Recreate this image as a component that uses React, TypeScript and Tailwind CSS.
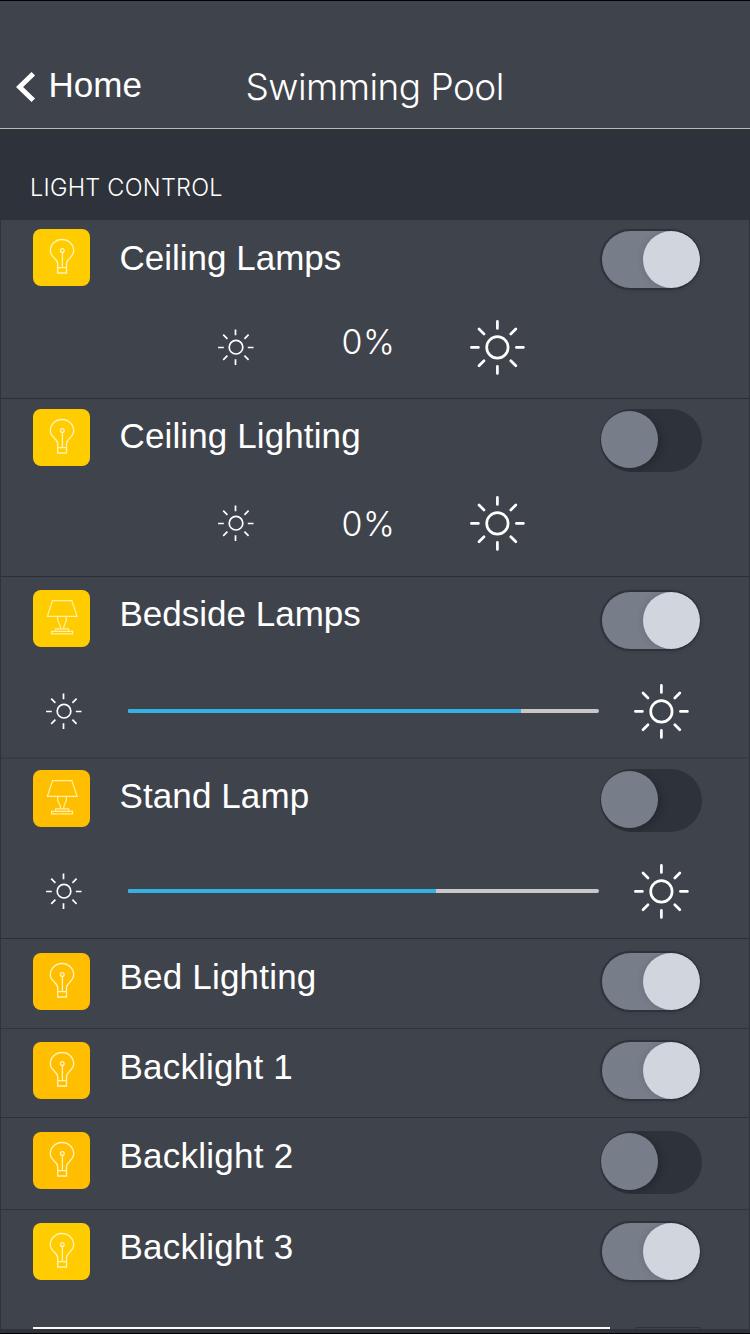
import React from "react";

type Row = {
  label: string;
  icon: "bulb" | "lamp";
  tile: string;
  on: boolean;
  row: string;
  iconTop: string;
  labelTop: string;
  toggleTop: string;
  dimmer?: { kind: "percent" | "slider"; value: number; sunTop: string; textTop?: string };
};

const rows: Row[] = [
  {
    label: "Ceiling Lamps", icon: "bulb", tile: "bg-[#ffcc00]", on: true,
    row: "h-[179px] border-b border-[#2b2e37]", iconTop: "mt-[9px]", labelTop: "mt-[18px]", toggleTop: "mt-[9px]",
    dimmer: { kind: "percent", value: 0, sunTop: "mt-[27px]", textTop: "mb-[11px]" },
  },
  {
    label: "Ceiling Lighting", icon: "bulb", tile: "bg-[#ffcc00]", on: false,
    row: "h-[178px] border-b border-[#2b2e37]", iconTop: "mt-[10px]", labelTop: "mt-[17px] tracking-[0.12px]", toggleTop: "mt-[10px]",
    dimmer: { kind: "percent", value: 0, sunTop: "mt-[24px]", textTop: "mt-[1px]" },
  },
  {
    label: "Bedside Lamps", icon: "lamp", tile: "bg-[#ffcc00]", on: true,
    row: "h-[182px] border-b-2 border-[#383c44]", iconTop: "mt-[13px]", labelTop: "mt-[17px]", toggleTop: "mt-[13px]",
    dimmer: { kind: "slider", value: 393, sunTop: "mt-[34px]" },
  },
  {
    label: "Stand Lamp", icon: "lamp", tile: "bg-[#ffbf00]", on: false,
    row: "h-[180px] border-b border-[#2b2e37]", iconTop: "mt-[11px]", labelTop: "mt-[17px] tracking-[0.1px]", toggleTop: "mt-[10px]",
    dimmer: { kind: "slider", value: 308, sunTop: "mt-[32px]" },
  },
  {
    label: "Bed Lighting", icon: "bulb", tile: "bg-[#ffbf00]", on: true,
    row: "h-[90px] border-b border-[#30343c]", iconTop: "mt-[14px]", labelTop: "mt-[18px] tracking-[0.2px]", toggleTop: "mt-[12px]",
  },
  {
    label: "Backlight 1", icon: "bulb", tile: "bg-[#ffbf00]", on: true,
    row: "h-[89px] border-b border-[#2d3139]", iconTop: "mt-[13px]", labelTop: "mt-[18px] tracking-[0.2px]", toggleTop: "mt-[11px]",
  },
  {
    label: "Backlight 2", icon: "bulb", tile: "bg-[#ffbf00]", on: false,
    row: "h-[92px] border-b border-[#30343c]", iconTop: "mt-[14px]", labelTop: "mt-[18px] tracking-[0.25px]", toggleTop: "mt-[13px]",
  },
  {
    label: "Backlight 3", icon: "bulb", tile: "bg-[#ffcc00]", on: true,
    row: "h-[119px]", iconTop: "mt-[13px]", labelTop: "mt-[17px] tracking-[0.25px]", toggleTop: "mt-[11px]",
  },
];

function BulbIcon() {
  return (
    <svg viewBox="0 0 57 57" className="size-[57px]" fill="none" stroke="#fff3b8" strokeWidth="1.3">
      <path d="M24.7 44V34.5C24.7 29.5 17.3 28.5 17.3 21.8C17.3 15.4 22.6 10.5 29 10.5S40.7 15.4 40.7 21.8C40.7 28.5 33.5 29.5 33.5 34.5V44Z" />
      <path d="M24.7 38.6H33.5M29.4 23.6V38.6" />
      <circle cx="29.3" cy="21.6" r="1.9" />
    </svg>
  );
}

function LampIcon() {
  return (
    <svg viewBox="0 0 57 57" className="size-[57px]" fill="none" stroke="#fff0a6" strokeWidth="1.2">
      <path d="M19.5 10.6H38.8L44.1 26.3H14.4Z" />
      <path d="M25.2 26.5C22.6 31 27.8 33.5 27.6 38.5M32.8 26.5C35.4 31 30.6 33.5 30.6 38.5" />
      <path d="M22.7 41V38.8H35.6V41M18.6 41.3H39.6V43.9H18.6Z" />
    </svg>
  );
}

function Sun({ large }: { large?: boolean }) {
  return large ? (
    <svg viewBox="-28.4 -28.4 56 56" className="size-[56px] shrink-0 overflow-visible" fill="none" stroke="#fff" strokeWidth="2.7" strokeLinecap="round">
      <circle r="10.7" />
      <path d="M0-26V-19M0 19V26M-26 0H-19M19 0H26M-18.4-18.4L-13.4-13.4M13.4 13.4L18.4 18.4M-18.4 18.4L-13.4 13.4M13.4-13.4L18.4-18.4" />
    </svg>
  ) : (
    <svg viewBox="-17.8 -18.2 36 36" className="size-[36px] shrink-0 overflow-visible" fill="none" stroke="#fff" strokeWidth="1.7">
      <circle cx="0.2" r="6.8" />
      <path d="M-0.3-17.7V-12M-0.3 12V17.7M-17.7 0.3H-12M12 0.3H17.7M-12.6-12.6L-8.4-8.4M8.6 8.4L12.8 12.6M-12.6 12.6L-8.4 8.4M8.6-8.4L12.8-12.6" />
    </svg>
  );
}

function Toggle({ on, top }: { on: boolean; top: string }) {
  return on ? (
    <div className={`${top} h-[61px] w-[101px] rounded-full bg-[#2e323a] p-[2px] shadow-[1px_1px_3px_rgba(46,50,58,0.3)]`}>
      <div className="flex h-[57px] w-[98px] justify-end overflow-hidden rounded-full bg-[#777e8a]">
        <div className="size-[57px] rounded-full bg-[#d1d5de] shadow-[0_0_6px_rgba(60,64,74,0.3)]" />
      </div>
    </div>
  ) : (
    <div className={`${top} h-[63px] w-[102px] overflow-hidden rounded-full bg-[#2e323a] pl-[1px] pt-[2px]`}>
      <div className="size-[57px] rounded-full bg-[#777e8a] shadow-[3px_2px_6px_rgba(26,28,34,0.45)]" />
    </div>
  );
}

function LightRow({ item }: { item: Row }) {
  const d = item.dimmer;
  return (
    <li className={`${item.row} overflow-hidden pl-8`}>
      <div className="flex h-[72px] items-start">
        <div className={`${item.iconTop} ${item.tile} size-[57px] shrink-0 rounded-[8px]`}>
          {item.icon === "bulb" ? <BulbIcon /> : <LampIcon />}
        </div>
        <span className={`${item.labelTop} ml-[29.5px] w-[480.5px] whitespace-nowrap text-[35px] leading-[40px]`}>{item.label}</span>
        <Toggle on={item.on} top={item.toggleTop} />
      </div>
      {d && d.kind === "percent" && (
        <div className={`${d.sunTop} flex h-[56px] items-center pl-[185px]`}>
          <Sun />
          <span className={`${d.textTop} ml-[87.5px] w-[127.5px] whitespace-nowrap font-['Inter',sans-serif] text-[34px] font-[350] leading-[40px] tracking-[0.5px]`}>{d.value}%</span>
          <Sun large />
        </div>
      )}
      {d && d.kind === "slider" && (
        <div className={`${d.sunTop} flex h-[56px] items-center pl-[13px]`}>
          <Sun />
          <div className="ml-[46px] mr-[34px] h-1 w-[471px] overflow-hidden rounded-full bg-[#c8c8c8]">
            <div className="h-full bg-[#33b1e5]" style={{ width: d.value }} />
          </div>
          <Sun large />
        </div>
      )}
    </li>
  );
}

export default function App() {
  return (
    <main className="flex h-[1334px] w-[750px] flex-col overflow-hidden border-y border-black bg-[#2e323a] font-['Liberation_Sans',sans-serif] text-white">
      <header className="flex h-[128px] shrink-0 items-start border-b border-[#b9b9b6] bg-[#3f434b]">
        <svg viewBox="0 0 20 32" className="ml-[15.5px] mt-[70px] h-8 w-5" fill="none" stroke="#fff" strokeWidth="5">
          <path d="M17.3 2.8L3.6 16L17.3 29.2" />
        </svg>
        <span className="ml-[13px] mt-[64px] w-[197px] text-[35px] leading-[40px]">Home</span>
        <h1 className="mt-[62px] whitespace-nowrap font-['Inter',sans-serif] text-[37px] font-[270] leading-[48px] tracking-[-0.55px]">Swimming Pool</h1>
      </header>
      <h2 className="h-[91px] shrink-0 pl-[30px] pt-[44px] font-['Inter',sans-serif] text-[23.5px] font-light leading-[30px] tracking-[0.25px]">LIGHT CONTROL</h2>
      <ul className="mx-px h-[1109px] shrink-0 overflow-hidden bg-[#3f434b]">
        {rows.map((item) => (
          <LightRow key={item.label} item={item} />
        ))}
      </ul>
      <div className="-mt-[2px] flex h-[2px] shrink-0 items-start pl-[33px]">
        <div className="h-[2px] w-[577px] bg-[#fffaf8]" />
        <div className="ml-[26px] h-[2px] w-[64px] border-x border-t border-[#2e323a]" />
      </div>
    </main>
  );
}
